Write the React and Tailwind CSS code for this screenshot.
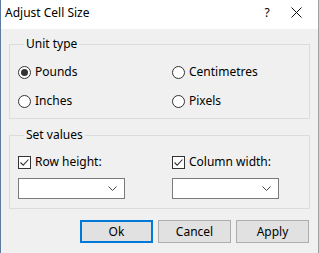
import { useState } from 'react'

const font = { fontFamily: '"Segoe UI", "Noto Sans", sans-serif' }

const Radio = ({ checked, label, onClick }) => (
  <button type="button" onClick={onClick} className="flex items-center gap-[4px] h-[16px] text-left">
    <span className="w-[13px] h-[13px] rounded-full border border-[#333] bg-white flex items-center justify-center">
      {checked && <span className="w-[7px] h-[7px] rounded-full bg-[#333]" />}
    </span>
    <span>{label}</span>
  </button>
)

const Check = ({ checked, label, onClick }) => (
  <button type="button" onClick={onClick} className="flex items-center gap-[4px] h-[16px]">
    <span className="w-[13px] h-[13px] border border-[#333] bg-white flex items-center justify-center">
      {checked && (
        <svg width="11" height="11" viewBox="0 0 11 11">
          <path d="M1.5 5.5 L4.2 8.2 L9.5 2.5" fill="none" stroke="#333" strokeWidth="1.1" />
        </svg>
      )}
    </span>
    <span>{label}</span>
  </button>
)

const Dropdown = () => (
  <div className="w-[107px] h-[21px] bg-white border border-[#7a7a7a] flex items-center justify-end pr-[7px]">
    <svg width="9" height="5" viewBox="0 0 9 5">
      <path d="M0.5 0.5 L4.5 4.5 L8.5 0.5" fill="none" stroke="#444" strokeWidth="1" />
    </svg>
  </div>
)

const Btn = ({ children, primary }) => (
  <button
    type="button"
    className={
      primary
        ? 'w-[73px] h-[23px] bg-[#e1e1e1] border-2 border-[#0078d7]'
        : 'w-[73px] h-[23px] bg-[#e1e1e1] border border-[#adadad]'
    }
  >
    {children}
  </button>
)

export default function App() {
  const [unit, setUnit] = useState('pounds')
  const [row, setRow] = useState(true)
  const [col, setCol] = useState(true)

  return (
    <div
      style={font}
      className="w-[319px] h-[253px] flex flex-col text-[12px] text-black bg-[#f0f0f0] border-l border-l-[#5b7ba0] border-r border-r-[#a0a0a0]"
    >
      <div className="h-[29px] bg-white flex items-center pl-[4px] shrink-0">
        <span className="flex-1 mt-[-4px]">Adjust Cell Size</span>
        <span className="w-[12px] mr-[18px] mt-[-4px] text-center">?</span>
        <svg width="11" height="11" viewBox="0 0 11 11" className="mr-[16px] mt-[-4px]">
          <path d="M0.5 0.5 L10.5 10.5 M10.5 0.5 L0.5 10.5" stroke="#111" strokeWidth="1" />
        </svg>
      </div>

      <div className="flex-1 px-[8px] pt-[6px]">
        <fieldset className="border border-[#dcdcdc] pl-[8px] pb-[9px]">
          <legend className="ml-[6px] px-[2px]">Unit type</legend>
          <div className="grid grid-cols-[154px_1fr] gap-y-[13px] mt-[11px]">
            <Radio checked={unit === 'pounds'} label="Pounds" onClick={() => setUnit('pounds')} />
            <Radio checked={unit === 'cm'} label="Centimetres" onClick={() => setUnit('cm')} />
            <Radio checked={unit === 'inches'} label="Inches" onClick={() => setUnit('inches')} />
            <Radio checked={unit === 'px'} label="Pixels" onClick={() => setUnit('px')} />
          </div>
        </fieldset>

        <fieldset className="border border-[#dcdcdc] pl-[8px] pb-[9px] mt-[7px]">
          <legend className="ml-[6px] px-[2px]">Set values</legend>
          <div className="grid grid-cols-[154px_1fr] gap-y-[8px] mt-[10px]">
            <Check checked={row} label="Row height:" onClick={() => setRow(!row)} />
            <Check checked={col} label="Column width:" onClick={() => setCol(!col)} />
            <Dropdown />
            <Dropdown />
          </div>
        </fieldset>

        <div className="flex justify-end gap-[5px] mt-[11px] pr-[1px]">
          <Btn primary>Ok</Btn>
          <Btn>Cancel</Btn>
          <Btn>Apply</Btn>
        </div>
      </div>
    </div>
  )
}
